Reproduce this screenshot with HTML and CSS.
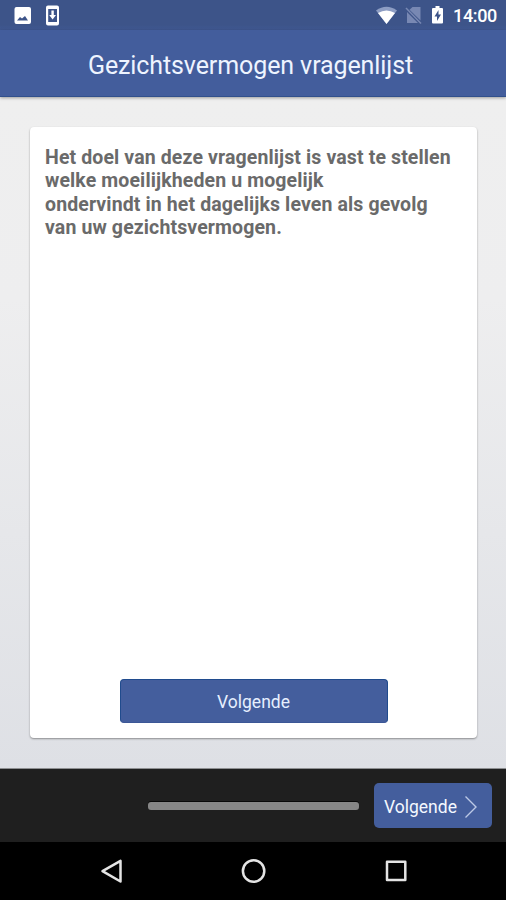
FILE: index.html
```html
<!DOCTYPE html>
<html lang="nl">
<head>
<meta charset="utf-8">
<title>Gezichtsvermogen vragenlijst</title>
<link rel="stylesheet" href="styles.css">
</head>
<body>
<div class="status">
  <svg class="status-left" width="60" height="30" viewBox="0 0 60 30">
    <path fill="#fff" fill-rule="evenodd" d="M3.500 7H16Q18 7 18 9V22Q18 24 16 24H3.500Q1.500 24 1.500 22V9Q1.500 7 3.500 7ZM4 20.500H15L12 16L9 18.500L7 17Z"/>
    <path fill="#fff" fill-rule="evenodd" d="M35 5.500H44Q46 5.500 46 7.500V23.500Q46 25.500 44 25.500H35Q33 25.500 33 23.500V7.500Q33 5.500 35 5.500ZM35.200 9V22H44V9ZM38.400 10.500H40.800V15H43L39.600 19.500L36.200 15H38.400Z"/>
  </svg>
  <svg class="status-right" width="70" height="30" viewBox="0 0 70 30">
    <path fill="#8d9dc3" d="M1 10.500Q11.500 3 22 10.500L11.500 24Z"/>
    <path fill="#fff" d="M3 13Q11.500 8 20 13L11.500 24Z"/>
    <path fill="#7888b3" d="M37.500 7H45.500V20.500L34.500 9.800ZM32 12L43 23H32Z"/>
    <path stroke="#7888b3" stroke-width="1.500" d="M31 8L46 23.500"/>
    <path fill="#fff" fill-rule="evenodd" d="M60.500 6H64.500V8H67Q68 8 68 9V22.500Q68 23.500 67 23.500H58Q57 23.500 57 22.500V9Q57 8 58 8H60.500ZM63.500 10L59.500 16.500H62V21L66 14.500H63.500Z"/>
  </svg>
  <span class="clock">14:00</span>
</div>
<header class="header"><h1 class="title">Gezichtsvermogen vragenlijst</h1></header>
<main class="content">
  <section class="card">
    <p class="intro">Het doel van deze vragenlijst is vast te stellen<br>welke moeilijkheden u mogelijk<br>ondervindt in het dagelijks leven als gevolg<br>van uw gezichtsvermogen.</p>
    <button class="button">Volgende</button>
  </section>
</main>
<footer class="footer">
  <div class="progress"></div>
  <button class="next"><span>Volgende</span>
    <svg width="14" height="24" viewBox="0 0 14 24"><path d="M1.500 1.500L12 12L1.500 22.500" fill="none" stroke="#bcc9e6" stroke-width="1.400"/></svg>
  </button>
</footer>
<nav class="nav">
  <svg width="506" height="58" viewBox="0 0 506 58" fill="none" stroke="#e4e4e4" stroke-width="2.500" stroke-linejoin="round">
    <path d="M120.500 18.800V39.500L102.500 29.100Z"/>
    <circle cx="253.600" cy="29" r="10.700"/>
    <rect x="387" y="19.800" width="18.300" height="18.300"/>
  </svg>
</nav>
</body>
</html>
```
FILE: styles.css
```css
* { box-sizing: border-box; }
body {
  margin: 0;
  width: 506px;
  height: 900px;
  display: flex;
  flex-direction: column;
  overflow: hidden;
  background: #000;
  font-family: Roboto, "Liberation Sans", sans-serif;
}
svg { display: block; }
.status {
  flex: none;
  height: 30px;
  display: flex;
  align-items: center;
  padding: 0 9px 0 13px;
  background: linear-gradient(#3d5489 0 25px, #405993);
  color: #fff;
}
.status-right { margin-left: auto; margin-right: 8px; }
.clock { font-size: 18px; letter-spacing: -.35px; font-weight: 500; line-height: 30px; padding-top: 2px; }
.header {
  flex: none;
  position: relative;
  height: 67px;
  background: #435d9c;
  border-bottom: 1px solid #31508c;
  box-shadow: 0 1px 3px rgba(0, 0, 0, .35);
  text-align: center;
}
.title {
  margin: 0;
  padding-right: 5px;
  font-size: 25px;
  letter-spacing: -.1px;
  font-weight: 400;
  line-height: 72px;
  color: #eef4ff;
}
.content {
  flex: none;
  height: 672px;
  padding: 30px 29px 31px 30px;
  background: linear-gradient(#efefef 0%, #eeeeef 30%, #dee0e5 100%);
  border-bottom: 1px solid #8e8f91;
}
.card {
  height: 611px;
  display: flex;
  flex-direction: column;
  justify-content: space-between;
  align-items: center;
  padding: 18.500px 15px 15px;
  background: #fff;
  border-radius: 4px;
  box-shadow: 0 1px 2px rgba(0, 0, 0, .38);
}
.intro {
  align-self: stretch;
  margin: 0;
  font-size: 19.500px;
  letter-spacing: .12px;
  font-weight: 700;
  line-height: 23.500px;
  white-space: nowrap;
  color: #6a6a6a;
}
.button, .next {
  border: 0;
  padding: 0;
  font: 400 17.500px Roboto, "Liberation Sans", sans-serif;
  color: #e6efff;
  background: #445e9d;
}
.button {
  width: 268px;
  height: 44px;
  padding-top: 2px;
  border: 1px solid #204b8d;
  border-bottom-color: #3c5796;
  border-radius: 4px;
}
.footer {
  flex: none;
  height: 73px;
  display: flex;
  align-items: center;
  justify-content: flex-end;
  padding-right: 14px;
  background: #1f1f1f;
}
.progress {
  width: 211px;
  height: 8px;
  margin-right: 15px;
  background: #868686;
  border-radius: 3px;
  box-shadow: 0 -1px 0 #080808;
}
.next {
  display: flex;
  align-items: center;
  width: 118px;
  height: 45px;
  padding: 2px 0 0 10px;
  border-radius: 5px;
  color: #f4f8ff;
}
.next svg { margin-left: 7px; }
.nav { flex: none; height: 58px; background: #000; }
```
